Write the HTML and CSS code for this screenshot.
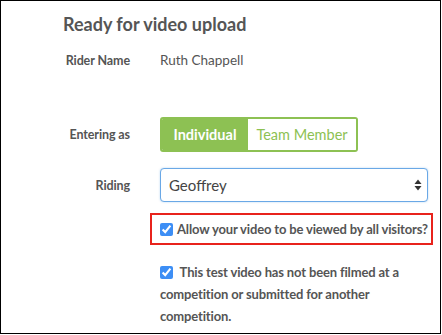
FILE: index.html
```html
<!DOCTYPE html>
<html lang="en">
<head>
    <meta charset="UTF-8">
    <meta name="viewport" content="width=device-width, initial-scale=1.0">
    <title>Ready for video upload</title>
    <link rel="stylesheet" href="styles.css">
</head>
<body>

<div class="frame">
    <h1 class="heading">Ready for video upload</h1>

    <div class="row row-name">
        <div class="label">Rider Name</div>
        <div class="value">Ruth Chappell</div>
    </div>

    <div class="row row-entering">
        <div class="label">Entering as</div>
        <div class="toggle">
            <button class="toggle-btn active">Individual</button>
            <button class="toggle-btn">Team Member</button>
        </div>
    </div>

    <div class="row row-riding">
        <div class="label">Riding</div>
        <div class="select-wrap">
            <select class="select">
                <option>Geoffrey</option>
            </select>
            <svg class="select-arrows" width="8" height="12" viewBox="0 0 8 12">
                <path d="M4 0.5 L7.5 5 L0.5 5 Z" fill="#333"/>
                <path d="M4 11.5 L7.5 7 L0.5 7 Z" fill="#333"/>
            </svg>
        </div>
    </div>

    <div class="row row-check">
        <div class="label"></div>
        <label class="check highlight">
            <input type="checkbox" checked>
            <span>Allow your video to be viewed by all visitors?</span>
        </label>
    </div>

    <div class="row row-check2">
        <div class="label"></div>
        <label class="check check-wrap">
            <input type="checkbox" checked>
            This test video has not been filmed at a competition or submitted for another competition.
        </label>
    </div>
</div>

</body>
</html>
```

FILE: styles.css
```css
html, body {
    margin: 0;
    background-color: #fff;
}
body {
    font-family: Lato, "Open Sans", sans-serif;
    color: #555;
}
.frame {
    width: 441px;
    height: 334px;
    box-sizing: border-box;
    border: 1.5px solid #000;
    overflow: hidden;
}
.heading {
    margin: 12px 0 0 62px;
    font-size: 18px;
    font-weight: bold;
    line-height: 22px;
    color: #555;
}
.row {
    display: grid;
    grid-template-columns: 129px 1fr;
    column-gap: 30px;
    align-items: center;
    padding-right: 12px;
}
.label {
    text-align: right;
    font-weight: bold;
    font-size: 12.5px;
    letter-spacing: -0.1px;
}
.value {
    font-size: 13.5px;
}
.row-name {
    margin-top: 17px;
}
.row-entering {
    margin-top: 49px;
}
.toggle {
    display: flex;
    width: 198px;
    height: 35px;
    box-sizing: border-box;
    border: 2px solid #8dc153;
    border-radius: 3px;
    overflow: hidden;
}
.toggle-btn {
    border: none;
    margin: 0;
    padding: 0;
    font-family: inherit;
    font-size: 14.5px;
    background-color: #fff;
    color: #8dc153;
    width: 108px;
    flex-shrink: 0;
}
.toggle-btn.active {
    background-color: #8dc153;
    color: #fff;
    font-weight: bold;
    width: 86px;
}
.row-riding {
    margin-top: 16px;
}
.select-wrap {
    position: relative;
}
.select {
    appearance: none;
    -webkit-appearance: none;
    width: 100%;
    height: 34px;
    box-sizing: border-box;
    border: 1px solid #6aa8e6;
    border-radius: 4px;
    background-color: #fff;
    padding: 0 8px;
    font-family: inherit;
    font-size: 15px;
    color: #444;
    box-shadow: 0 0 2px rgba(102, 170, 230, 0.5);
}
.select-arrows {
    position: absolute;
    right: 6px;
    top: 11px;
}
.row-check {
    margin-top: 11px;
}
.check {
    display: flex;
    align-items: center;
    font-weight: bold;
    font-size: 13px;
    letter-spacing: -0.15px;
    color: #555;
    white-space: nowrap;
}
.check input {
    margin: 0 4px 0 0;
    width: 13px;
    height: 13px;
    accent-color: #3d8ef5;
}
.highlight {
    justify-self: start;
    margin-left: -10px;
    padding: 6px 3px 6px 8px;
    border: 2px solid #e8231c;
}
.row-check2 {
    margin-top: 16px;
}
.check-wrap {
    display: block;
    white-space: normal;
    line-height: 22px;
    max-width: 246px;
}
.check-wrap input {
    vertical-align: -2px;
}
```
